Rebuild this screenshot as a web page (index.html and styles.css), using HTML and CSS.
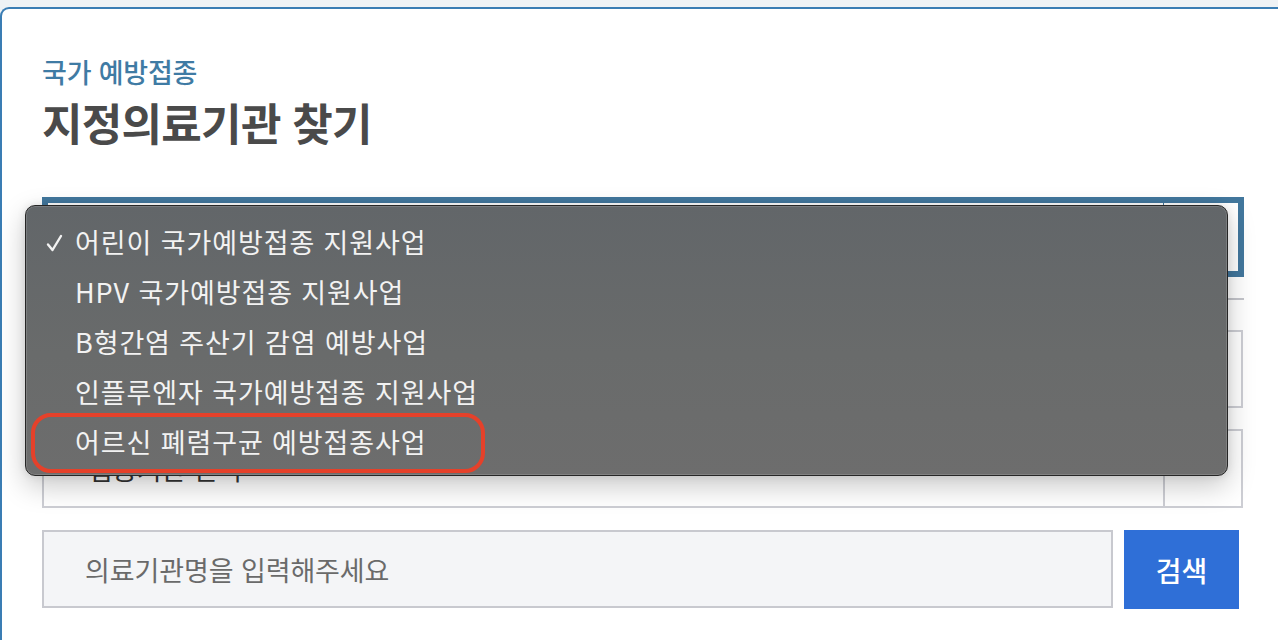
FILE: index.html
```html
<!DOCTYPE html>
<html lang="ko">
<head>
<meta charset="utf-8">
<title>지정의료기관 찾기</title>
<link rel="stylesheet" href="styles.css">
</head>
<body>
<div class="card">
  <p class="eyebrow">국가 예방접종</p>
  <h1 class="title">지정의료기관 찾기</h1>
  <div class="form">
    <div class="field field-active">
      <span class="field-text"></span>
      <span class="field-arrow field-arrow-active"></span>
    </div>
    <div class="rule"></div>
    <div class="field field-plain">
      <span class="field-text"></span>
      <span class="field-arrow"></span>
    </div>
    <div class="field field-plain field-second">
      <span class="field-text">접종기관 선택</span>
      <span class="field-arrow"></span>
    </div>
    <div class="search-row">
      <div class="search-input">의료기관명을 입력해주세요</div>
      <button class="search-btn" type="button">검색</button>
    </div>
  </div>
</div>

<div class="menu">
  <div class="menu-item">
    <span class="menu-check">
      <svg width="17" height="18" viewBox="0 0 17 18"><path d="M2 10.5 L6.5 16 L15 2" fill="none" stroke="#f2f2f2" stroke-width="2.4" stroke-linecap="round" stroke-linejoin="round"/></svg>
    </span>
    <span class="menu-label">어린이 국가예방접종 지원사업</span>
  </div>
  <div class="menu-item"><span class="menu-check"></span><span class="menu-label">HPV 국가예방접종 지원사업</span></div>
  <div class="menu-item"><span class="menu-check"></span><span class="menu-label">B형간염 주산기 감염 예방사업</span></div>
  <div class="menu-item"><span class="menu-check"></span><span class="menu-label">인플루엔자 국가예방접종 지원사업</span></div>
  <div class="menu-item"><span class="menu-check"></span><span class="menu-label">어르신 폐렴구균 예방접종사업</span></div>
</div>
<div class="highlight"></div>
</body>
</html>
```

FILE: styles.css
```css
html, body {
  margin: 0;
  padding: 0;
  background: #eef2f5;
  overflow: hidden;
  width: 1278px;
  height: 640px;
}

body {
  font-family: "Noto Sans CJK KR", "Noto Sans", sans-serif;
  position: relative;
}

.card {
  margin-top: 7px;
  width: 1278px;
  height: 633px;
  box-sizing: border-box;
  background: #ffffff;
  border-top: 2px solid #3a7db4;
  border-left: 2px solid #3a7db4;
  border-top-left-radius: 9px;
  padding: 47px 0 0 40px;
}

.eyebrow {
  margin: 0;
  font-size: 27px;
  line-height: 32px;
  font-weight: 500;
  color: #3f7ba4;
  letter-spacing: -0.2px;
}

.title {
  margin: 9px 0 0;
  font-size: 44px;
  line-height: 50px;
  font-weight: 700;
  color: #4a4a4a;
  letter-spacing: -0.7px;
}

.form {
  margin-top: 50px;
  width: 1202px;
  display: flex;
  flex-direction: column;
}

.field {
  display: flex;
  box-sizing: border-box;
  background: #ffffff;
}

.field-active {
  height: 80px;
  border: 6px solid #42779d;
}

.field-plain {
  height: 78px;
  border: 2px solid #cdced4;
  width: 1201px;
  margin-top: 30px;
}

.field-second {
  margin-top: 21px;
  height: 79px;
}

.field-text {
  flex: 1;
  display: flex;
  align-items: center;
  padding-left: 44px;
  font-size: 27px;
  color: #333333;
  letter-spacing: -0.5px;
}

.field-arrow {
  width: 76px;
  border-left: 2px solid #cdced4;
}

.field-arrow-active {
  width: 74px;
  border-left: 1px solid #42779d;
}

.rule {
  margin-top: 21px;
  height: 2px;
  background: #c4c5cb;
}

.search-row {
  margin-top: 22px;
  display: flex;
  gap: 11px;
  width: 1197px;
}

.search-input {
  flex: 1;
  height: 78px;
  box-sizing: border-box;
  border: 2px solid #c8c9cf;
  background: #f4f5f7;
  display: flex;
  align-items: center;
  padding-left: 41px;
  font-size: 27px;
  color: #6a6a6a;
  letter-spacing: -0.1px;
}

.search-btn {
  width: 115px;
  height: 79px;
  border: 0;
  margin: 0;
  padding: 0;
  background: #2f6fd7;
  color: #ffffff;
  font-family: "Noto Sans CJK KR", "Noto Sans", sans-serif;
  font-size: 28px;
  font-weight: 500;
  letter-spacing: 0;
}

.menu {
  position: absolute;
  left: 25px;
  top: 205px;
  width: 1203px;
  height: 271px;
  box-sizing: border-box;
  padding: 10px 0 11px;
  border-radius: 10px;
  border: 1px solid #262626;
  background: linear-gradient(180deg, #626669 0%, #696b6b 55%, #6d6d6d 100%);
  box-shadow: inset 0 0 0 1px rgba(255,255,255,0.14), 0 10px 28px rgba(0,0,0,0.22), 0 0 8px rgba(0,0,0,0.10);
}

.menu-item {
  height: 50px;
  display: flex;
  align-items: center;
  padding-left: 20px;
}

.menu-check {
  width: 29px;
  display: flex;
  align-items: center;
  padding-top: 3px;
}

.menu-label {
  font-size: 27px;
  color: #f2f2f2;
  letter-spacing: 0.9px;
  white-space: nowrap;
}

.highlight {
  position: absolute;
  left: 31px;
  top: 413px;
  width: 454px;
  height: 60px;
  box-sizing: border-box;
  border: 4px solid #e5412a;
  border-radius: 20px;
}
```
